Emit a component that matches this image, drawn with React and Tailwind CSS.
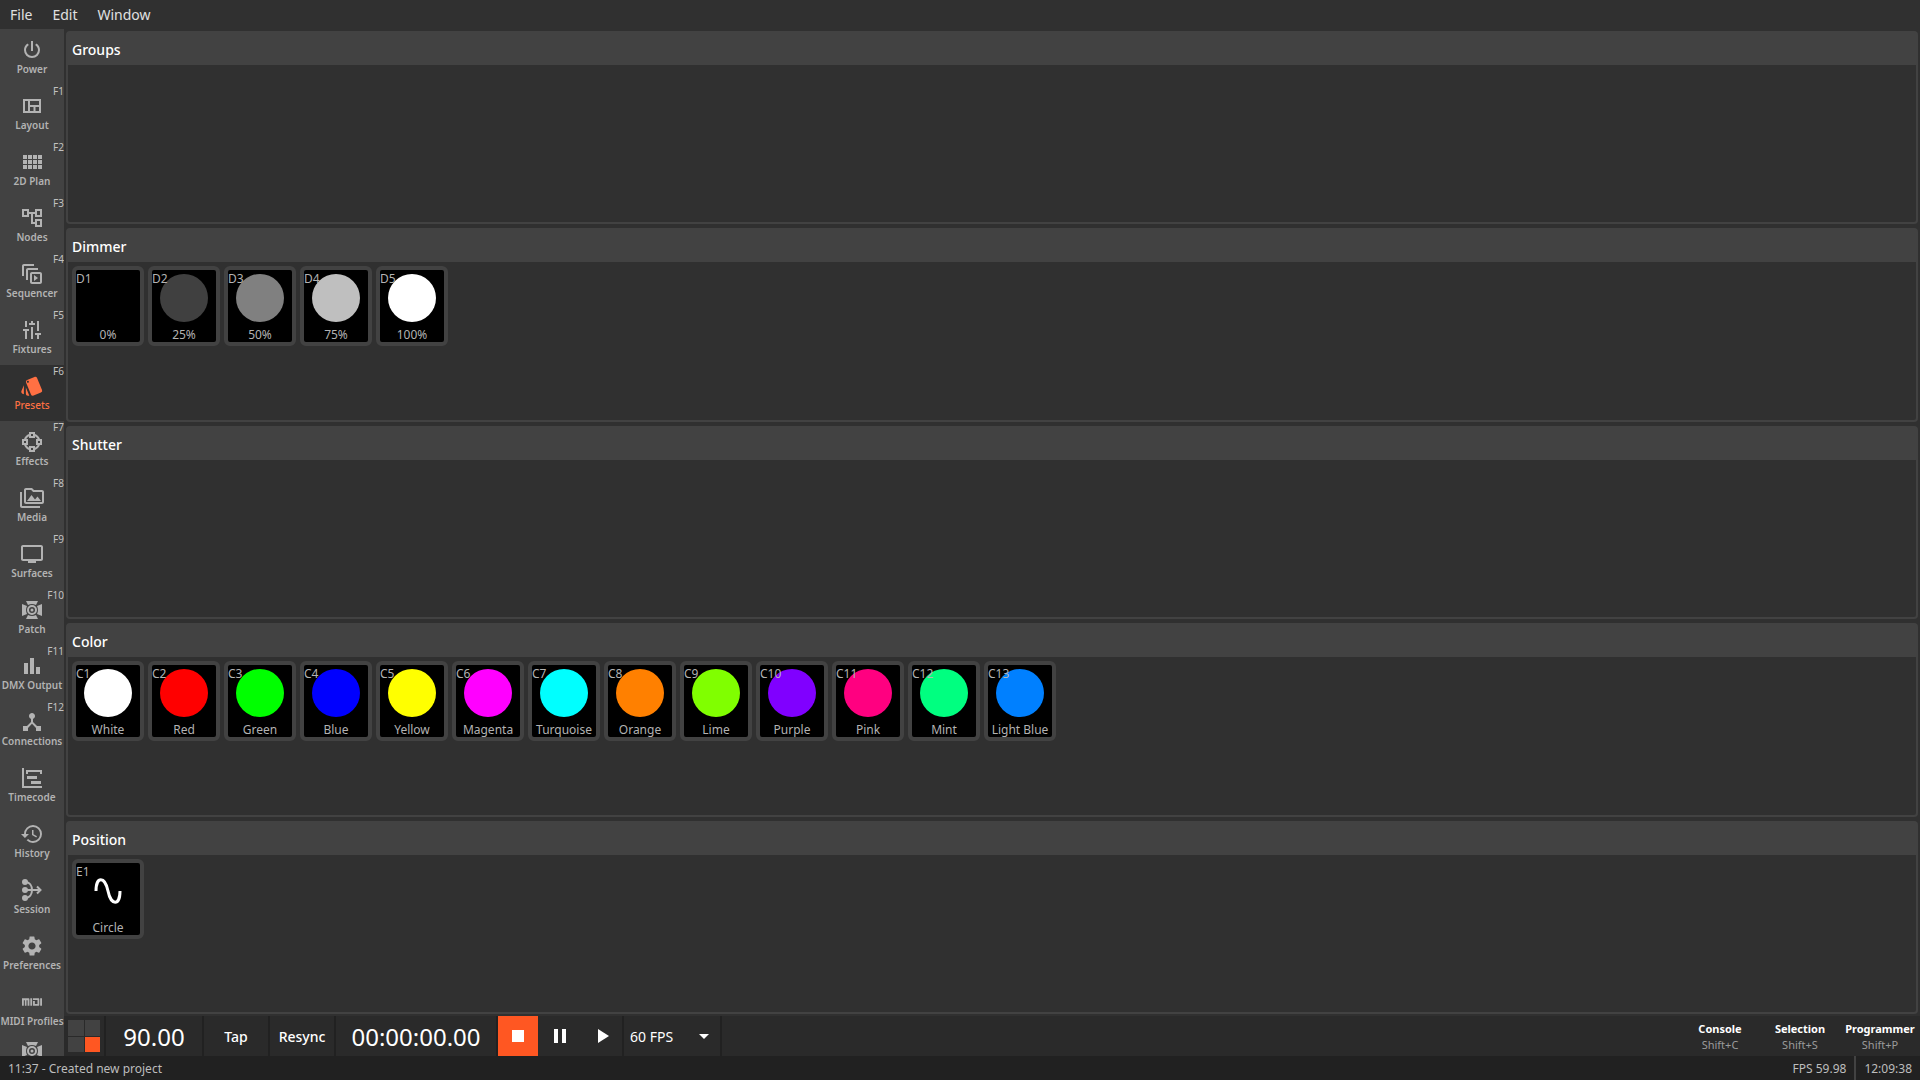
import {
  MdOutlineAccountTree, MdStyle, MdOutlinePermMedia, MdTv, MdDeviceHub, MdHistory, MdSettings,
  MdStop, MdPause, MdPlayArrow, MdArrowDropDown,
} from 'react-icons/md';
import { SiMidi } from 'react-icons/si';

const Glyph = ({ d }) => (
  <svg viewBox="0 0 24 24" className="size-6" fill="currentColor" fillRule="evenodd" aria-hidden="true">
    <path d={d} />
  </svg>
);

const Power = () => (
  <Glyph d="M16.56 5.44L15.11 6.89C16.84 7.94 18 9.83 18 12A6 6 0 0 1 12 18A6 6 0 0 1 6 12C6 9.83 7.16 7.94 8.88 6.88L7.44 5.44C5.36 6.88 4 9.28 4 12A8 8 0 0 0 12 20A8 8 0 0 0 20 12C20 9.28 18.64 6.88 16.56 5.44M13 3H11V13H13Z" />
);
const Layout = () => (
  <Glyph d="M3 5H21V19H3V5M5 7V17H8V7H5M10 7V11H19V7H10M10 13V17H13.5V13H10M15.5 13V17H19V13H15.5Z" />
);
const Plan = () => (
  <Glyph d="M3 9H7V5H3V9M3 14H7V10H3V14M8 14H12V10H8V14M13 14H17V10H13V14M8 9H12V5H8V9M13 5V9H17V5H13M18 14H22V10H18V14M3 19H7V15H3V19M8 19H12V15H8V19M13 19H17V15H13V19M18 19H22V15H18V19M18 5V9H22V5H18Z" />
);
const Sequencer = () => (
  <Glyph d="M4 2C2.9 2 2 2.9 2 4V14H4V4H14V2H4M8 6C6.9 6 6 6.9 6 8V18H8V8H18V6H8M12 10C10.9 10 10 10.9 10 12V20C10 21.1 10.9 22 12 22H20C21.1 22 22 21.1 22 20V12C22 10.9 21.1 10 20 10H12M12 12H20V20H12V12M14 13V19L18 16L14 13Z" />
);
const Fixtures = () => (
  <Glyph d="M5 3V9H7V3H5M11 3V5H9V7H15V5H13V3H11M17 3V13H19V3H17M3 11V13H5V21H7V13H9V11H3M11 9V21H13V9H11M15 15V17H17V21H19V17H21V15H15Z" />
);
const Effects = () => (
  <Glyph d="M9 2V4.06C6.72 4.92 4.92 6.72 4.05 9H2V15H4.06C4.92 17.28 6.72 19.09 9 19.95V22H15V19.94C17.28 19.08 19.09 17.28 19.95 15H22V9H19.94C19.08 6.72 17.28 4.92 15 4.05V2H9M11 4H13V6H11V4M9 6.25V8H15V6.25C16.18 6.86 17.14 7.82 17.75 9H16V15H17.75C17.14 16.18 16.18 17.14 15 17.75V16H9V17.75C7.82 17.14 6.86 16.18 6.25 15H8V9H6.25C6.86 7.82 7.82 6.86 9 6.25M4 11H6V13H4V11M18 11H20V13H18V11M11 18H13V20H11V18Z" />
);
const Spotlight = () => (
  <svg viewBox="0 0 24 24" className="size-6" fill="currentColor" aria-hidden="true">
    <path d="M6 3H18L16 7Q12 5 8 7ZM6 21H18L16 17Q12 19 8 17ZM2 6L7 8Q5 12 7 16L2 18ZM22 6L17 8Q19 12 17 16L22 18Z" />
    <circle cx="12" cy="12" r="4" fill="none" stroke="currentColor" strokeWidth="2" />
    <circle cx="12" cy="12" r="1.5" />
  </svg>
);
const Bars = () => <Glyph d="M4 9H8V20H4V9M10 4H14V20H10V4M16 13H20V20H16V13Z" />;
const Timecode = () => <Glyph d="M2 2H4V20H22V22H2V2M6 4H22V8H20V6H8V8H6V4M7 10H17V13H7V10M11 15H21V18H11V15Z" />;
const Session = () => (
  <svg viewBox="0 0 24 24" className="size-6" fill="currentColor" aria-hidden="true">
    <circle cx="5" cy="4" r="3" /><circle cx="5" cy="12" r="3" /><circle cx="5" cy="20" r="3" />
    <path d="M5 4C10 4 12 8 12 12C12 16 10 20 5 20M5 12H20M17 8.5L20.5 12L17 15.5" fill="none" stroke="currentColor" strokeWidth="2" />
  </svg>
);

const NAV = [
  ['Power', '', Power], ['Layout', 'F1', Layout], ['2D Plan', 'F2', Plan],
  ['Nodes', 'F3', MdOutlineAccountTree], ['Sequencer', 'F4', Sequencer], ['Fixtures', 'F5', Fixtures],
  ['Presets', 'F6', MdStyle], ['Effects', 'F7', Effects], ['Media', 'F8', MdOutlinePermMedia],
  ['Surfaces', 'F9', MdTv], ['Patch', 'F10', Spotlight], ['DMX Output', 'F11', Bars],
  ['Connections', 'F12', MdDeviceHub], ['Timecode', '', Timecode], ['History', '', MdHistory],
  ['Session', '', Session], ['Preferences', '', MdSettings], ['MIDI Profiles', '', SiMidi],
];

const DIMMER = [['D1', '0%', '#000000'], ['D2', '25%', '#404040'], ['D3', '50%', '#808080'], ['D4', '75%', '#bfbfbf'], ['D5', '100%', '#ffffff']];
const COLOR = [
  ['C1', 'White', '#ffffff'], ['C2', 'Red', '#ff0000'], ['C3', 'Green', '#00ff00'], ['C4', 'Blue', '#0000ff'],
  ['C5', 'Yellow', '#ffff00'], ['C6', 'Magenta', '#ff00ff'], ['C7', 'Turquoise', '#00ffff'], ['C8', 'Orange', '#ff8000'],
  ['C9', 'Lime', '#80ff00'], ['C10', 'Purple', '#8000ff'], ['C11', 'Pink', '#ff0080'], ['C12', 'Mint', '#00ff80'],
  ['C13', 'Light Blue', '#0080ff'],
];
const POSITION = [['E1', 'Circle', null]];
const PANELS = [['Groups', []], ['Dimmer', DIMMER], ['Shutter', []], ['Color', COLOR], ['Position', POSITION]];

function NavItem({ label, hotkey, Icon, active }) {
  return (
    <button
      className={
        'relative flex h-14 w-full shrink-0 flex-col items-center pt-[9px] ' +
        (active ? 'bg-[#303030] text-[#ff7043]' : 'text-[#b3b3b3]')
      }
    >
      <span className="flex h-6 items-center"><Icon className={Icon === SiMidi ? 'size-5' : 'size-6'} /></span>
      <span className={'text-[10px] leading-[14px] whitespace-nowrap ' + (active ? 'font-medium' : 'font-semibold')}>{label}</span>
      {hotkey && <span className="absolute top-0 right-0 text-[10px] leading-3 text-[#c1c1c1]">{hotkey}</span>}
    </button>
  );
}

function Tile({ id, label, color }) {
  return (
    <button className="relative flex h-20 w-18 flex-col items-center justify-between rounded-md border-4 border-[#424242] bg-black pt-1 text-xs text-[#b3b3b3]">
      {color ? (
        <span className="size-12 rounded-full" style={{ backgroundColor: color }} />
      ) : (
        <svg viewBox="0 0 48 48" className="size-12" fill="none" stroke="#fff" strokeWidth="3" aria-hidden="true">
          <path d="M12 24C12 9 21 9 24 24S36 39 36 24" />
        </svg>
      )}
      <span className="leading-[14px] whitespace-nowrap">{label}</span>
      <span className="absolute top-0 left-0 leading-[18px]">{id}</span>
    </button>
  );
}

function Panel({ title, items }) {
  return (
    <section className="m-0.5 flex min-h-0 flex-1 flex-col rounded-sm border-2 border-[#424242]">
      <h2 className="flex h-8 shrink-0 items-center bg-[#424242] px-1 pt-0.5 text-sm font-medium text-white">{title}</h2>
      <div className="flex flex-wrap gap-1 p-1">
        {items.map(([id, label, color]) => <Tile key={id} id={id} label={label} color={color} />)}
      </div>
    </section>
  );
}

export default function App() {
  return (
    <div className="flex h-screen flex-col overflow-hidden bg-[#303030] font-['Noto_Sans',sans-serif] text-white">
      <nav className="flex h-[29px] shrink-0 items-center text-sm text-[#e0e0e0]">
        {['File', 'Edit', 'Window'].map((m) => <button key={m} className="px-2.5">{m}</button>)}
      </nav>
      <div className="flex min-h-0 flex-1">
        <aside className="flex w-16 shrink-0 flex-col overflow-hidden bg-[#424242]">
          {NAV.map(([label, hotkey, Icon]) => (
            <NavItem key={label} label={label} hotkey={hotkey} Icon={Icon} active={label === 'Presets'} />
          ))}
          <button aria-label="Fixtures library" className="flex h-14 w-full shrink-0 justify-center pt-0.5 text-[#b3b3b3]">
            <Spotlight />
          </button>
        </aside>
        <div className="flex min-w-0 flex-1 flex-col">
          <main className="flex min-h-0 flex-1 flex-col">
            {PANELS.map(([title, items]) => <Panel key={title} title={title} items={items} />)}
          </main>
          <footer className="flex h-10 shrink-0 bg-[#2a2a2a]">
            <div className="border-r-2 border-[#212121] p-1">
              <div className="grid size-8 grid-cols-2 gap-px">
                <span className="bg-[#424242]" /><span className="bg-[#424242]" />
                <span className="bg-[#424242]" /><span className="bg-[#ff5722]" />
              </div>
            </div>
            <button className="w-[98px] border-r-2 border-[#212121] pt-0.5 text-2xl">90.00</button>
            <button className="w-[66px] border-r-2 border-[#212121] pt-0.5 text-sm font-medium">Tap</button>
            <button className="w-[66px] border-r-2 border-[#212121] pt-0.5 text-sm font-medium">Resync</button>
            <div className="flex w-[162px] items-center justify-center border-r-2 border-[#212121] pt-0.5 text-2xl">00:00:00.00</div>
            <button aria-label="Stop" className="flex w-10 items-center justify-center bg-[#ff5722]"><MdStop className="size-6" /></button>
            <button aria-label="Pause" className="flex w-11 items-center justify-center"><MdPause className="size-6" /></button>
            <button aria-label="Play" className="flex w-10 items-center justify-center"><MdPlayArrow className="size-6" /></button>
            <div className="relative flex w-[100px] border-x-2 border-[#212121]">
              <select aria-label="Frame rate" className="w-full appearance-none pt-0.5 pl-1.5 text-sm"><option>60 FPS</option></select>
              <MdArrowDropDown className="pointer-events-none absolute top-2 right-1 size-6" />
            </div>
            <div className="ml-auto flex">
              {[['Console', 'C'], ['Selection', 'S'], ['Programmer', 'P']].map(([n, k]) => (
                <button key={n} className="flex w-20 flex-col items-center justify-center pt-0.5">
                  <span className="text-[11px] leading-4 font-bold">{n}</span>
                  <span className="text-[11px] leading-4 text-[#9a9a9a]">Shift+{k}</span>
                </button>
              ))}
            </div>
          </footer>
        </div>
      </div>
      <div className="flex h-6 shrink-0 items-center bg-[#212121] text-xs text-[#bdbdbd]">
        <span className="flex-1 px-2 pt-0.5">11:37 - Created new project</span>
        <span className="px-2 pt-0.5">FPS 59.98</span>
        <span className="flex h-6 items-center border-l-2 border-[#424242] px-2 pt-0.5">12:09:38</span>
      </div>
    </div>
  );
}
